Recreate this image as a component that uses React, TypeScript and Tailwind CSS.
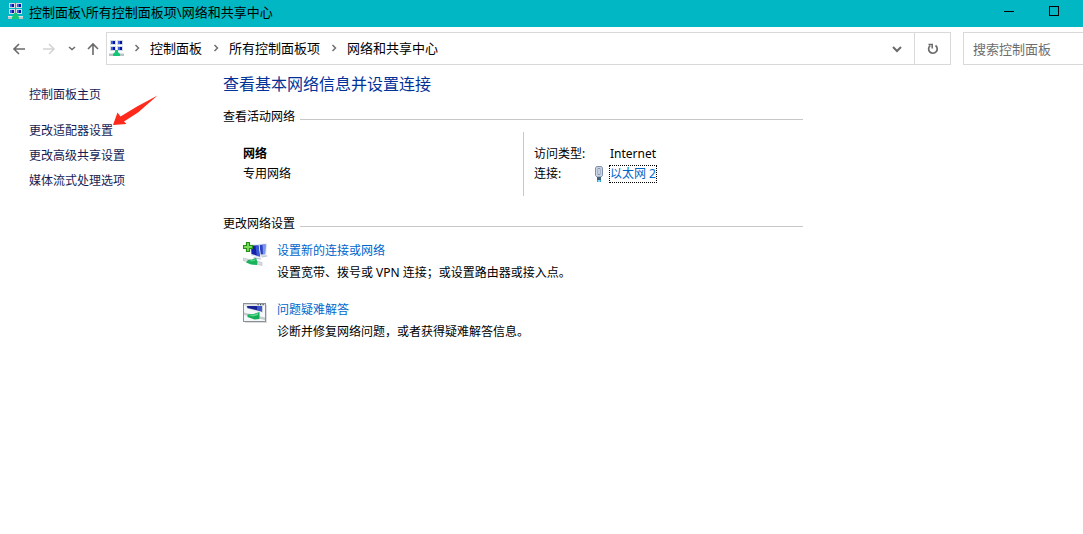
import type { ReactNode } from "react";

const CRUMBS = ["控制面板", "所有控制面板项", "网络和共享中心"];

const SIDE_LINKS = ["更改适配器设置", "更改高级共享设置", "媒体流式处理选项"];

function NetworkCenterIcon() {
  return (
    <svg width="16" height="17" viewBox="0 0 16 17" className="shrink-0" aria-hidden="true">
      {[
        [1, 0],
        [8, 0],
        [1, 6],
        [8, 6],
      ].map(([x, y]) => (
        <g key={`${x}-${y}`}>
          <rect x={x} y={y} width="6" height="5" fill="#d3dbe4" />
          <rect x={x + 1} y={y + 1} width="4" height="3" fill="#3f5fdc" />
          <rect x={x + 3} y={y + 1} width="2" height="3" fill="#0b149c" />
        </g>
      ))}
      <rect x="0" y="13" width="15" height="3" fill="#b9c2c4" />
      <rect x="0" y="13" width="15" height="1" fill="#dde3e4" />
      <path d="M6 10h3v2l2 2v2H4v-2l2-2z" fill="#12c877" />
    </svg>
  );
}

function Chevron({ down = false, wide = false }: { down?: boolean; wide?: boolean }) {
  return (
    <svg
      width="10"
      height="10"
      viewBox="0 0 10 10"
      fill="none"
      stroke="currentColor"
      strokeWidth={wide ? 2 : 1.5}
      className="shrink-0"
      aria-hidden="true"
    >
      <path d={wide ? "M1 3l4 4 4-4" : down ? "M2 3l3 2.500L8 3" : "M3.500 2L6.500 5 3.500 8"} />
    </svg>
  );
}

function NavArrow({ path }: { path: string }) {
  return (
    <svg
      width="14"
      height="14"
      viewBox="0 0 14 14"
      fill="none"
      stroke="currentColor"
      strokeWidth="1.6"
      aria-hidden="true"
    >
      <path d={path} />
    </svg>
  );
}

function EthernetIcon() {
  return (
    <svg width="10" height="17" viewBox="0 0 10 17" aria-hidden="true">
      <path d="M2.500 .5h5l1 1.500v7.500L7 11H3L1.500 9.500V2z" fill="#c9d5e6" stroke="#8492a8" />
      <path d="M4 2.500h2v6H4z" fill="#fff" stroke="#7587a3" strokeWidth="0.8" />
      <path d="M3 11h4v3H3z" fill="#42617c" />
      <path d="M3 14h1.500v2H3zM5.500 14H7v2H5.500z" fill="#29a9d8" />
    </svg>
  );
}

function NewConnectionIcon() {
  return (
    <svg width="26" height="26" viewBox="0 0 26 26" aria-hidden="true">
      {/* Back monitor */}
      <path d="M15 3l9-.5-1 12-6 .5z" fill="#d5dde9" />
      <path d="M16.500 4l6-.5-.5 9.500-4.500.5z" fill="#2b40c4" />
      <path d="M19.500 3.800l3-.3-.5 9.500-2 .2z" fill="#7d97ee" />
      <path d="M18 15l6-.8.5 1.300-5 1z" fill="#c3cbd6" />
      {/* Front monitor */}
      <path d="M7 3.500h9.500l1.500 13.500L8 14.500z" fill="#dbe3ef" />
      <path d="M8 4.500h7.500l1.300 11L8.500 13z" fill="#1421a8" />
      <path d="M12.500 4.500h3l1.300 11-3-.8z" fill="#3b58d6" />
      <path d="M11 16l7 1.500v1l-8-1z" fill="#b8c2ce" />
      {/* Cable */}
      <path d="M0 17l19 4.500v3L0 19.500z" fill="#d9dee0" stroke="#a7b0b5" strokeWidth="0.5" />
      <path d="M5 19l4-.5 4-1.500 1.500 4-.5 3L8 23.500 3 21.500z" fill="#18b35a" />
      <path d="M6 19.500l3.500-.5 2.500-1 .5 1.500-4 1z" fill="#4fd685" />
      <path
        d="M3.500 1.500h3v3h3v3h-3v3h-3v-3h-3v-3h3z"
        fill="#7cdc5c"
        stroke="#258c18"
        strokeWidth="1.200"
      />
    </svg>
  );
}

function TroubleshootIcon() {
  return (
    <svg width="26" height="26" viewBox="0 0 26 26" aria-hidden="true">
      <path d="M2 22h21V5h1v18H2z" fill="#dcdcdc" />
      <rect x="0.500" y="3.500" width="22" height="18" fill="#f5f8fa" stroke="#8b9095" />
      <path d="M1 4h21v1.500H1z" fill="#d5dade" />
      <path d="M14.500 4h1.200v1.200h-1.200zM17 4h1.200v1.200H17zM19.500 4h1.200v1.200h-1.200z" fill="#485057" />
      <path d="M3 6h17v6.500L4 8.500z" fill="#c9d2de" />
      <path d="M4 6h15v5.500L4.500 8z" fill="#182394" />
      <path d="M14 6h5v5.500l-5-1.500z" fill="#4057c9" />
      <path d="M1 12.500l21 5v2.500L1 15z" fill="#c5cccf" />
      <path d="M4.500 14.500l6-.5 6-2v7l-5 .5-7-2.500z" fill="#14ad57" />
      <path d="M5.500 15l5.500-.5 4-1.500v2l-5 1.500z" fill="#5bd88b" />
    </svg>
  );
}

function SectionTitle({ children }: { children: ReactNode }) {
  return (
    <div className="flex items-center gap-[5px]">
      <h2 className="leading-5">{children}</h2>
      <div className="mt-1 h-px flex-1 bg-[#c8c8c8]" />
    </div>
  );
}

interface TaskProps {
  icon: ReactNode;
  title: string;
  description: string;
}

function Task({ icon, title, description }: TaskProps) {
  return (
    <li className="flex gap-2">
      <div className="w-[26px] shrink-0 pt-px">{icon}</div>
      <div>
        <a href="#" className="block leading-[22px] text-[#0066cc]">
          {title}
        </a>
        <p className="leading-[22px]">{description}</p>
      </div>
    </li>
  );
}

export default function App() {
  return (
    <div className="min-h-screen bg-white font-['Noto_Sans','Noto_Sans_CJK_SC',sans-serif] text-xs text-black">
      {/* Title bar */}
      <header className="flex h-[27px] items-center bg-[#00b7c3] pr-[7px] pl-2">
        <div className="flex flex-1 items-center gap-[5px] pb-1">
          <NetworkCenterIcon />
          <h1 className="text-[13px] leading-5">控制面板\所有控制面板项\网络和共享中心</h1>
        </div>
        <button type="button" aria-label="最小化" className="flex h-full w-[45px] justify-center pt-[11px]">
          <span className="h-px w-[10px] bg-black" />
        </button>
        <button type="button" aria-label="最大化" className="flex h-full w-[45px] justify-center pt-[6px]">
          <span className="size-[10px] border border-black" />
        </button>
      </header>

      {/* Navigation */}
      <nav className="flex h-[43px] items-center pl-3">
        <div className="flex items-center text-[#6a6a6a]">
          <button type="button" aria-label="后退" className="w-[30px]">
            <NavArrow path="M13 7H2M7 2L2 7l5 5" />
          </button>
          <button type="button" aria-label="前进" className="w-[25px] text-[#d4d4d4]">
            <NavArrow path="M1 7h11M7 2l5 5-5 5" />
          </button>
          <button type="button" aria-label="最近浏览的位置" className="w-[19px]">
            <Chevron down />
          </button>
          <button type="button" aria-label="上移" className="w-5">
            <NavArrow path="M7 13V2M2 7l5-5 5 5" />
          </button>
        </div>

        <div className="mr-3 flex h-[33px] flex-1 border border-[#d9d9d9]">
          <div className="flex flex-1 items-center pl-[2px] text-[13px]">
            <NetworkCenterIcon />
            <ol className="-ml-[2px] flex flex-1 items-center">
              {CRUMBS.map((crumb) => (
                <li key={crumb} className="flex items-center">
                  <span className="flex w-[27px] justify-center text-[#707070]">
                    <Chevron />
                  </span>
                  <a href="#">{crumb}</a>
                </li>
              ))}
            </ol>
            <button type="button" aria-label="以前的位置" className="px-3 text-[#6a6a6a]">
              <Chevron wide />
            </button>
          </div>
          <button
            type="button"
            aria-label="刷新"
            className="flex w-9 items-center justify-center border-l border-[#d9d9d9] text-[#6a6a6a]"
          >
            <svg width="12" height="12" viewBox="0 0 12 12" fill="none" stroke="currentColor" strokeWidth="1.7">
              <path d="M3.200 2.600A4.300 4.300 0 1 0 8.500 2.500" />
              <path d="M1.500 1.500h3.700v4" strokeWidth="1.5" />
            </svg>
          </button>
        </div>

        <input
          type="search"
          aria-label="搜索控制面板"
          placeholder="搜索控制面板"
          className="h-[33px] w-[120px] border border-r-0 border-[#d9d9d9] px-[9px] text-[13px] outline-none placeholder:text-[#6d6d6d]"
        />
      </nav>

      <div className="flex">
        {/* Sidebar */}
        <aside className="relative w-[223px] shrink-0 pt-3 pl-[29px] text-[#151c55]">
          <a href="#" className="block leading-[25px]">
            控制面板主页
          </a>
          <ul className="mt-[11px]">
            {SIDE_LINKS.map((link) => (
              <li key={link} className="leading-[25px]">
                <a href="#">{link}</a>
              </li>
            ))}
          </ul>
          <svg
            width="46"
            height="32"
            viewBox="0 0 46 32"
            className="absolute top-6 left-28"
            aria-hidden="true"
          >
            <path d="M1 31L5.500 18.500 8.500 22.500 25 12.500 45.500 1.500 26 18.500 12 27.500 14.500 30z" fill="#ff2a1c" />
          </svg>
        </aside>

        {/* Content */}
        <main className="max-w-[580px] flex-1 pt-1">
          <p className="text-base leading-5 text-[#003399]">查看基本网络信息并设置连接</p>

          <section className="mt-[13px]">
            <SectionTitle>查看活动网络</SectionTitle>
            <div className="mt-[5px] flex pl-5 leading-5">
              <div className="w-[280px] pt-3">
                <p className="font-bold">网络</p>
                <p>专用网络</p>
              </div>
              <dl className="h-16 flex-1 border-l border-[#c8c8c8] pt-3 pl-[10px]">
                <div className="flex">
                  <dt className="w-[76px]">访问类型:</dt>
                  <dd>Internet</dd>
                </div>
                <div className="flex">
                  <dt className="w-[60px]">连接:</dt>
                  <dd className="flex items-center gap-[6px]">
                    <EthernetIcon />
                    <a
                      href="#"
                      className="block leading-4 text-[#0066cc] outline outline-dotted outline-black"
                    >
                      以太网 2
                    </a>
                  </dd>
                </div>
              </dl>
            </div>
          </section>

          <section className="mt-[18px]">
            <SectionTitle>更改网络设置</SectionTitle>
            <ul className="mt-[6px] space-y-[15px] pl-5">
              <Task
                icon={<NewConnectionIcon />}
                title="设置新的连接或网络"
                description="设置宽带、拨号或 VPN 连接；或设置路由器或接入点。"
              />
              <Task
                icon={<TroubleshootIcon />}
                title="问题疑难解答"
                description="诊断并修复网络问题，或者获得疑难解答信息。"
              />
            </ul>
          </section>
        </main>
      </div>
    </div>
  );
}
